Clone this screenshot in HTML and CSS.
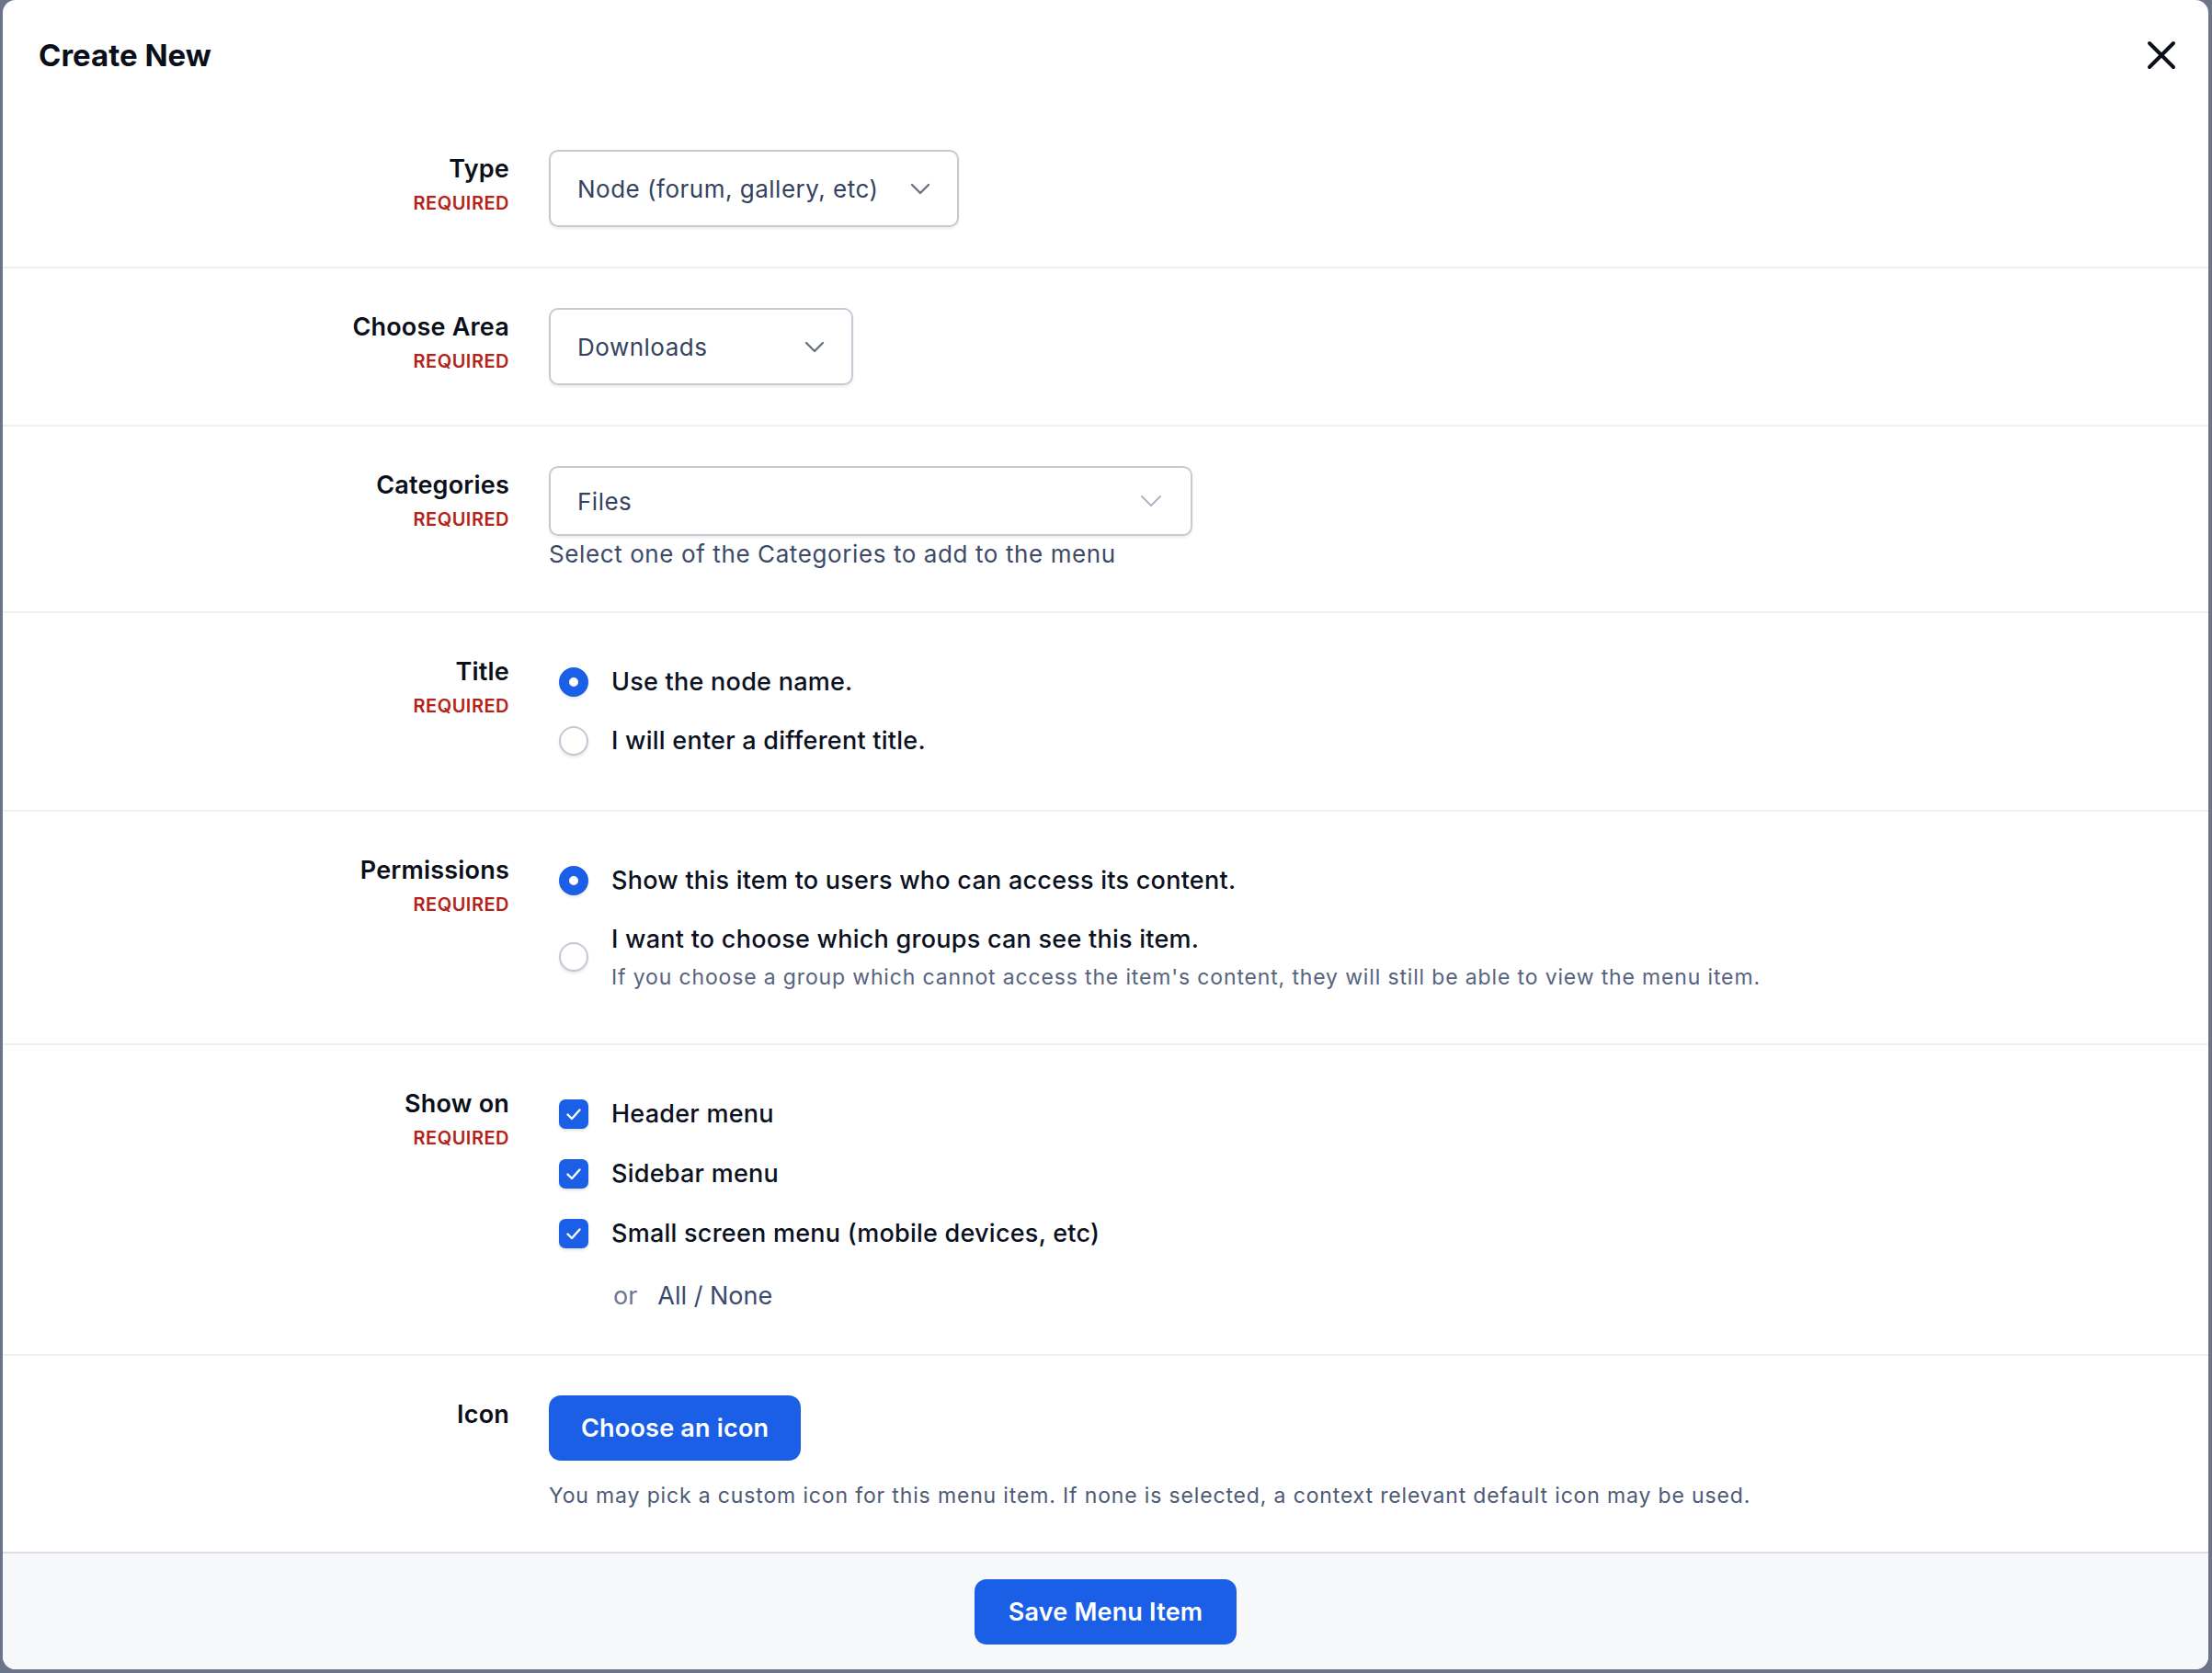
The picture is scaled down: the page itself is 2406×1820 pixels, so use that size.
FILE: index.html
```html
<!DOCTYPE html>
<html lang="en">
<head>
    <meta charset="UTF-8">
    <meta name="viewport" content="width=device-width, initial-scale=1.0">
    <title>Create New</title>
    <link rel="stylesheet" href="styles.css">
</head>
<body>
    <div class="modal">
        <div class="modal-header">
            <h1>Create New</h1>
            <button class="close" type="button" aria-label="Close">
                <svg width="32" height="32" viewBox="0 0 32 32"><path d="M3 3 L29 29 M29 3 L3 29" stroke="currentColor" stroke-width="4" stroke-linecap="round"/></svg>
            </button>
        </div>

        <form class="modal-body">
            <!-- Type -->
            <div class="row">
                <div class="label">
                    <span class="name">Type</span>
                    <span class="req">REQUIRED</span>
                </div>
                <div class="control">
                    <div class="select select-type">
                        <span>Node (forum, gallery, etc)</span>
                        <svg width="22" height="13" viewBox="0 0 22 13"><path d="M2 2 L11 11 L20 2" fill="none" stroke="currentColor" stroke-width="2.4" stroke-linecap="round" stroke-linejoin="round"/></svg>
                    </div>
                </div>
            </div>

            <!-- Area -->
            <div class="row">
                <div class="label">
                    <span class="name">Choose Area</span>
                    <span class="req">REQUIRED</span>
                </div>
                <div class="control">
                    <div class="select select-area">
                        <span>Downloads</span>
                        <svg width="22" height="13" viewBox="0 0 22 13"><path d="M2 2 L11 11 L20 2" fill="none" stroke="currentColor" stroke-width="2.4" stroke-linecap="round" stroke-linejoin="round"/></svg>
                    </div>
                </div>
            </div>

            <!-- Categories -->
            <div class="row">
                <div class="label">
                    <span class="name">Categories</span>
                    <span class="req">REQUIRED</span>
                </div>
                <div class="control">
                    <div class="select select-cat">
                        <span>Files</span>
                        <svg width="24" height="14" viewBox="0 0 24 14"><path d="M2 2 L12 12 L22 2" fill="none" stroke="currentColor" stroke-width="2" stroke-linecap="round" stroke-linejoin="round"/></svg>
                    </div>
                    <p class="help">Select one of the Categories to add to the menu</p>
                </div>
            </div>

            <!-- Title -->
            <div class="row">
                <div class="label">
                    <span class="name">Title</span>
                    <span class="req">REQUIRED</span>
                </div>
                <div class="control">
                    <ul class="choices">
                        <li><span class="radio checked"></span><span class="opt">Use the node name.</span></li>
                        <li><span class="radio"></span><span class="opt">I will enter a different title.</span></li>
                    </ul>
                </div>
            </div>

            <!-- Permissions -->
            <div class="row">
                <div class="label">
                    <span class="name">Permissions</span>
                    <span class="req">REQUIRED</span>
                </div>
                <div class="control">
                    <ul class="choices">
                        <li><span class="radio checked"></span><span class="opt">Show this item to users who can access its content.</span></li>
                        <li>
                            <span class="radio"></span>
                            <div>
                                <span class="opt">I want to choose which groups can see this item.</span>
                                <span class="desc">If you choose a group which cannot access the item's content, they will still be able to view the menu item.</span>
                            </div>
                        </li>
                    </ul>
                </div>
            </div>

            <!-- Show on -->
            <div class="row">
                <div class="label">
                    <span class="name">Show on</span>
                    <span class="req">REQUIRED</span>
                </div>
                <div class="control">
                    <ul class="choices checks">
                        <li><span class="check"><svg width="32" height="32" viewBox="0 0 32 32"><path d="M9.5 16.5 L14 21 L22.5 11.5" fill="none" stroke="#fff" stroke-width="2.4" stroke-linecap="round" stroke-linejoin="round"/></svg></span><span class="opt">Header menu</span></li>
                        <li><span class="check"><svg width="32" height="32" viewBox="0 0 32 32"><path d="M9.5 16.5 L14 21 L22.5 11.5" fill="none" stroke="#fff" stroke-width="2.4" stroke-linecap="round" stroke-linejoin="round"/></svg></span><span class="opt">Sidebar menu</span></li>
                        <li><span class="check"><svg width="32" height="32" viewBox="0 0 32 32"><path d="M9.5 16.5 L14 21 L22.5 11.5" fill="none" stroke="#fff" stroke-width="2.4" stroke-linecap="round" stroke-linejoin="round"/></svg></span><span class="opt">Small screen menu (mobile devices, etc)</span></li>
                    </ul>
                    <div class="all-none"><span class="or">or</span><a href="#">All / None</a></div>
                </div>
            </div>

            <!-- Icon -->
            <div class="row">
                <div class="label">
                    <span class="name">Icon</span>
                </div>
                <div class="control">
                    <button class="btn" type="button">Choose an icon</button>
                    <p class="help small">You may pick a custom icon for this menu item. If none is selected, a context relevant default icon may be used.</p>
                </div>
            </div>
        </form>

        <div class="modal-footer">
            <button class="btn" type="button">Save Menu Item</button>
        </div>
    </div>
</body>
</html>
```

FILE: styles.css
```css
body {
    margin: 0;
    background-color: #6b7489;
    font-family: Inter, "Noto Sans", sans-serif;
    color: #0b0f19;
}
.modal {
    width: 2399px;
    height: 1816px;
    margin-left: 3px;
    background-color: #fff;
    border-radius: 14px;
    display: flex;
    flex-direction: column;
    overflow: hidden;
}
.modal-header {
    height: 120px;
    padding: 0 35px 0 39px;
    display: flex;
    align-items: center;
    justify-content: space-between;
    box-sizing: border-box;
}
.modal-header h1 {
    margin: 0;
    font-size: 33px;
    font-weight: 700;
    color: #0a0f1a;
}
.close {
    border: none;
    background: none;
    padding: 0;
    width: 32px;
    height: 32px;
    color: #0b0f19;
    cursor: pointer;
}
.close svg {
    display: block;
}
.modal-body {
    flex: 1;
    margin: 0;
}
.row {
    display: grid;
    grid-template-columns: 551px 1fr;
    column-gap: 43px;
    padding: 43px 40px 43px 0;
    border-top: 2px solid #eef0f2;
}
.row:first-child {
    border-top: none;
}
.label {
    display: flex;
    flex-direction: column;
    align-items: flex-end;
    text-align: right;
    padding-top: 1px;
}
.label .name {
    font-size: 27px;
    font-weight: 600;
    line-height: 40px;
    letter-spacing: 0.2px;
    color: #0b0f19;
}
.label .req {
    margin-top: 2px;
    font-size: 20px;
    font-weight: 600;
    line-height: 30px;
    letter-spacing: 0.5px;
    color: #b42318;
}
.select {
    display: flex;
    align-items: center;
    justify-content: space-between;
    height: 84px;
    padding: 0 29px 0 29px;
    border: 2px solid #c5cad3;
    border-radius: 10px;
    box-shadow: 0 2px 3px rgba(0, 0, 0, 0.08);
    box-sizing: border-box;
    font-size: 26px;
    letter-spacing: 0.5px;
    color: #344260;
}
.select svg {
    color: #6b7280;
}
.select-type {
    width: 446px;
}
.select-area {
    width: 331px;
}
.select-cat {
    width: 700px;
    height: 76px;
    padding-right: 31px;
}
.select-cat svg {
    color: #aeb6c2;
}
.help {
    margin: 0;
    font-size: 26px;
    line-height: 39px;
    letter-spacing: 0.6px;
    color: #3c4a67;
}
.help.small {
    margin-top: 21px;
    font-size: 23px;
    line-height: 34px;
    letter-spacing: 0.85px;
    color: #4d5a75;
}
.choices {
    list-style: none;
    margin: 0;
    padding: 0 0 0 11px;
}
.choices li {
    display: flex;
    align-items: center;
    gap: 25px;
    padding: 12px 0;
}
.checks li {
    padding: 12px 0 13px;
}
.opt {
    display: block;
    font-size: 27px;
    font-weight: 500;
    line-height: 40px;
    letter-spacing: 0.25px;
    color: #0b1120;
}
.desc {
    display: block;
    margin-top: 4px;
    font-size: 23px;
    line-height: 34px;
    letter-spacing: 0.85px;
    color: #56637e;
}
.radio {
    flex: none;
    width: 32px;
    height: 32px;
    border: 2px solid #c3c9d3;
    border-radius: 50%;
    background-color: #fff;
    box-shadow: 0 2px 3px rgba(0, 0, 0, 0.1);
    box-sizing: border-box;
}
.radio.checked {
    border: 11px solid #1a5fe6;
}
.check {
    flex: none;
    width: 32px;
    height: 32px;
    border-radius: 7px;
    background-color: #1a5fe6;
    box-shadow: 0 2px 3px rgba(0, 0, 0, 0.12);
}
.check svg {
    display: block;
}
.all-none {
    margin-top: 15px;
    padding-left: 70px;
    font-size: 27px;
    line-height: 40px;
}
.all-none .or {
    color: #6b7690;
    margin-right: 22px;
}
.all-none a {
    color: #3a4a6e;
    text-decoration: none;
}
.btn {
    height: 71px;
    padding: 0 35px;
    border: none;
    border-radius: 13px;
    background-color: #1a5fe6;
    color: #fff;
    font-family: inherit;
    font-size: 27px;
    font-weight: 600;
    letter-spacing: 0.2px;
    cursor: pointer;
}
.modal-footer {
    height: 128px;
    border-top: 2px solid #d9dee9;
    background-color: #f7f8fa;
    display: flex;
    align-items: center;
    justify-content: center;
    box-sizing: border-box;
}
.modal-footer .btn {
    padding: 0 37px;
}
```
